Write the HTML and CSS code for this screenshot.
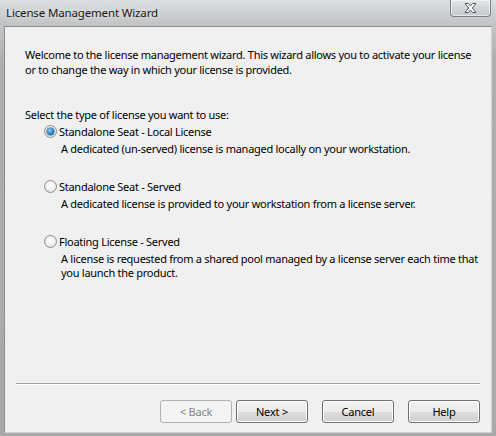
FILE: index.html
```html
<!DOCTYPE html>
<html>
<head>
<meta charset="utf-8">
<link rel="stylesheet" href="styles.css">
</head>
<body>
<div class="window">
  <div class="titlebar">
    <span class="title">License Management Wizard</span>
    <button class="close" aria-label="Close">
      <svg width="17" height="13" viewBox="0 0 17 13">
        <path d="M3 1.5h3.5l2 2.5 2-2.5H14l-3.7 4.5L14 10.5h-3.5l-2-2.5-2 2.5H3l3.7-4.5z" fill="#fdfdfd" stroke="#5a5a5a" stroke-width="1" stroke-linejoin="round"/>
      </svg>
    </button>
  </div>
  <div class="client">
    <div class="content">
      <p class="intro">Welcome to the license management wizard. This wizard allows you to activate your license<br>or to change the way in which your license is provided.</p>
      <p class="prompt">Select the type of license you want to use:</p>
      <div class="option first">
        <label class="radio-row"><span class="radio checked"></span><span>Standalone Seat - Local License</span></label>
        <p class="desc">A dedicated (un-served) license is managed locally on your workstation.</p>
      </div>
      <div class="option">
        <label class="radio-row"><span class="radio"></span><span>Standalone Seat - Served</span></label>
        <p class="desc">A dedicated license is provided to your workstation from a license server.</p>
      </div>
      <div class="option">
        <label class="radio-row"><span class="radio"></span><span>Floating License - Served</span></label>
        <p class="desc">A license is requested from a shared pool managed by a license server each time that<br>you launch the product.</p>
      </div>
    </div>
    <div class="footer">
      <div class="separator"></div>
      <div class="buttons">
        <button class="btn disabled">&lt; Back</button>
        <button class="btn next">Next &gt;</button>
        <button class="btn gap">Cancel</button>
        <button class="btn gap">Help</button>
      </div>
    </div>
  </div>
</div>
</body>
</html>
```
FILE: styles.css
```css
* { box-sizing: border-box; }
html, body { margin: 0; padding: 0; }
body {
  width: 496px;
  height: 436px;
  overflow: hidden;
  font-family: "Noto Sans", "Open Sans", sans-serif;
  font-size: 11px;
  letter-spacing: -0.27px;
  color: #000;
}
.window {
  width: 496px;
  height: 436px;
  display: flex;
  flex-direction: column;
  background: linear-gradient(to bottom, #d6d8d9 0px, #c3c5c6 26px, #aeaeae 60px, #a9a9a9 100%);
}
.titlebar {
  height: 26px;
  flex: none;
  display: flex;
  align-items: flex-start;
  background: linear-gradient(to bottom, #dcdedf 0%, #cfd1d2 45%, #bfc1c2 100%);
}
.title {
  margin: 6px 0 0 6px;
  font-size: 11.5px;
  letter-spacing: -0.15px;
  line-height: 14px;
  color: #1a1a1a;
  text-shadow: 0 0 6px #eeeeee;
  white-space: nowrap;
}
.close {
  margin-left: auto;
  margin-right: 5px;
  width: 41px;
  height: 17px;
  padding: 0;
  border: 1px solid #7d7f81;
  border-top: none;
  border-radius: 0 0 4px 4px;
  background: linear-gradient(to bottom, #e4e6e8 0%, #d3d6d8 50%, #c5c8cb 100%);
  box-shadow: inset 0 0 0 1px rgba(255,255,255,0.55);
  display: flex;
  align-items: center;
  justify-content: center;
}
.client {
  flex: 1;
  margin: 0 4px 3px 4px;
  background: #f0f0f0;
  border-top: 1px solid #8a8c8e;
  border-left: 1px solid #8a8c8e;
  border-right: 1px solid #d0d0d0;
  border-bottom: 1px solid #d0d0d0;
  display: flex;
  flex-direction: column;
}
.content {
  flex: 1;
  padding: 20px 0 0 20px;
  white-space: nowrap;
}
p { margin: 0; }
.intro { line-height: 15px; }
.prompt { margin-top: 30px; line-height: 15px; }
.option { margin-top: 23px; }
.option.first { margin-top: 2px; }
.radio-row {
  display: flex;
  align-items: center;
  height: 15px;
  padding-left: 19px;
}
.radio {
  width: 13px;
  height: 13px;
  border-radius: 50%;
  border: 1px solid #8e8f8f;
  background: radial-gradient(circle at 50% 40%, #ffffff 0%, #f2f2f2 45%, #d8d8d8 100%);
  margin-right: 2px;
  position: relative;
  flex: none;
}
.radio.checked::after {
  content: "";
  position: absolute;
  left: 2px;
  top: 2px;
  width: 7px;
  height: 7px;
  border-radius: 50%;
  background: radial-gradient(circle at 40% 35%, #9ad6f7 0%, #2f8ccf 45%, #17487c 100%);
  box-shadow: 0 0 0 0.5px #16456e;
}
.desc {
  margin-top: 2px;
  padding-left: 36px;
  line-height: 15px;
}
.option:last-child .desc { line-height: 14px; margin-top: 3px; }
.footer {
  flex: none;
  padding: 0 11px 9px 11px;
}
.separator {
  border-top: 1px solid #a0a0a0;
  border-bottom: 1px solid #ffffff;
}
.buttons {
  margin-top: 15px;
  display: flex;
  justify-content: flex-end;
}
.btn {
  width: 72px;
  height: 23px;
  padding: 0;
  font-family: inherit;
  font-size: 11px;
  letter-spacing: -0.2px;
  color: #000;
  border: 1px solid #707070;
  border-radius: 3px;
  background: linear-gradient(to bottom, #f2f2f2 0%, #ebebeb 50%, #dddddd 51%, #cfcfcf 100%);
  box-shadow: inset 0 0 0 1px #fcfcfc;
}
.btn.next { margin-left: 4px; }
.btn.gap { margin-left: 14px; }
.btn.disabled {
  color: #838383;
  border-color: #adb2b5;
  background: #f4f4f4;
  box-shadow: none;
}
```
